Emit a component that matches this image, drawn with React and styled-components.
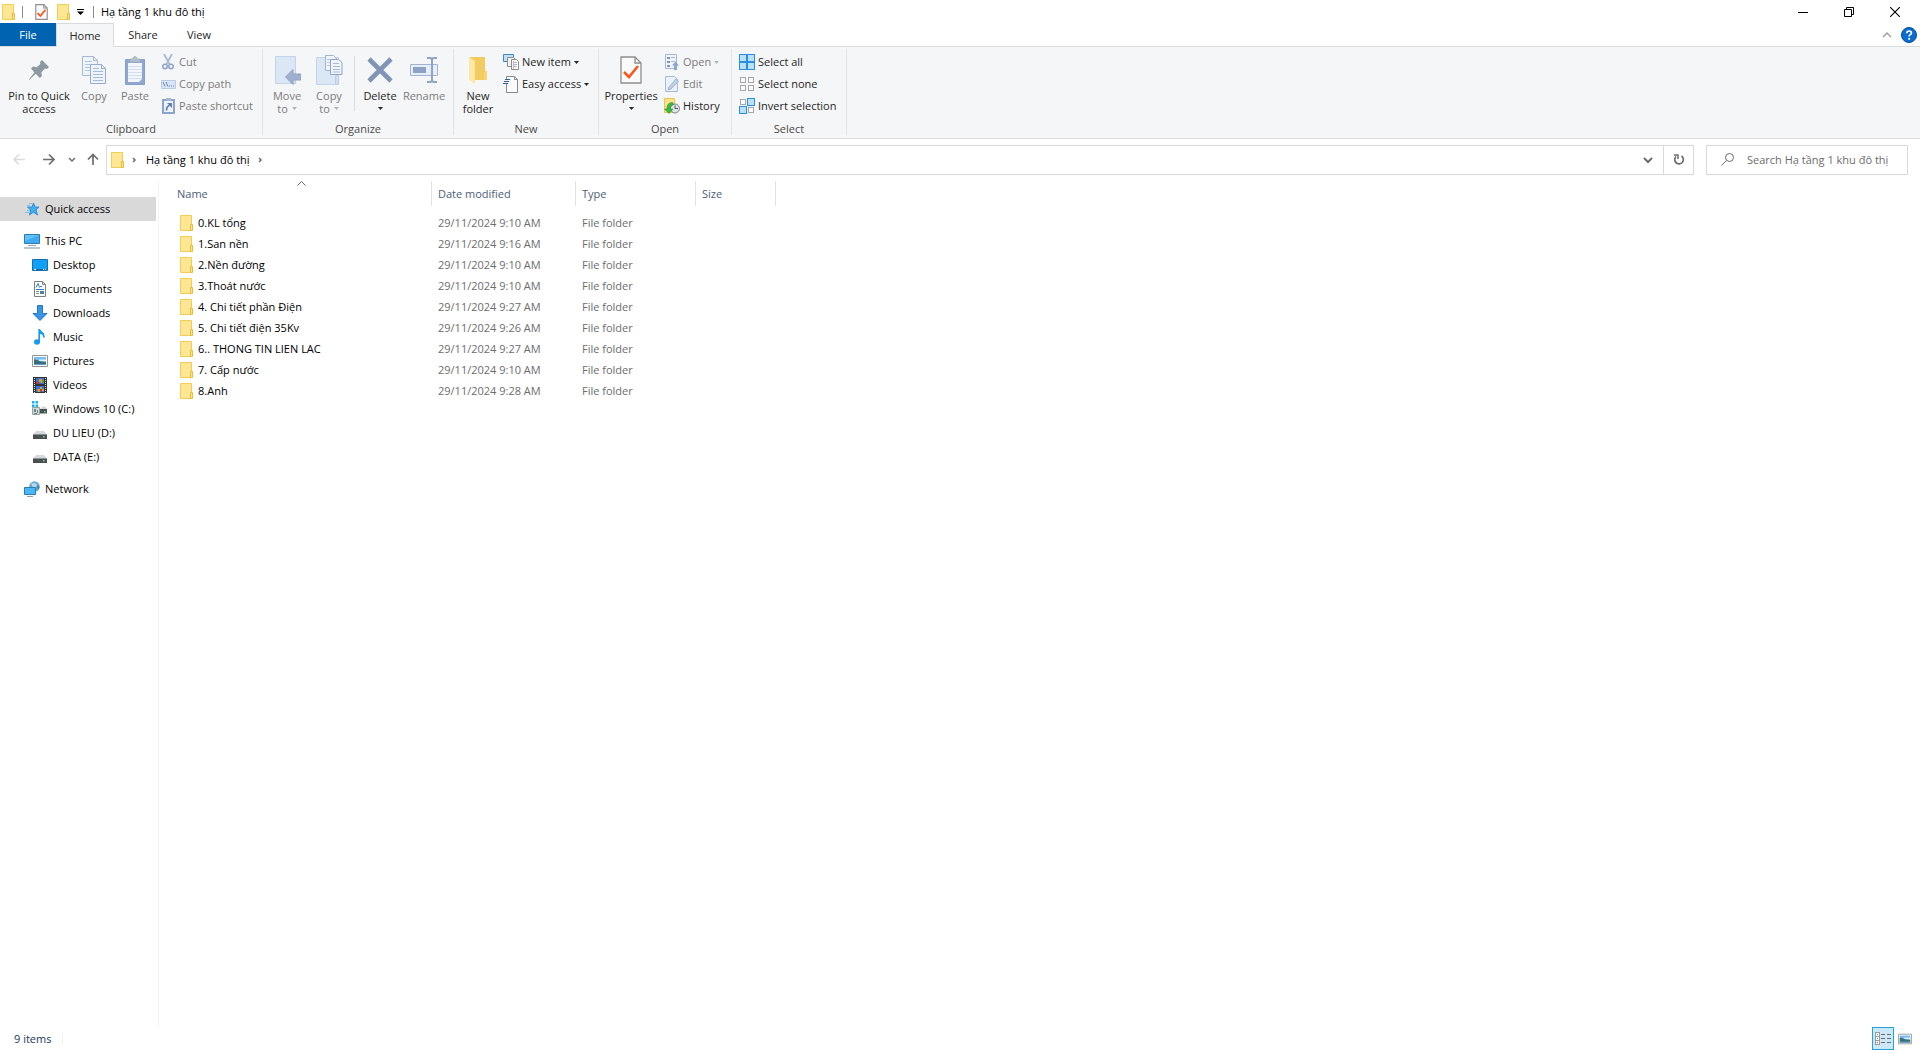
import React from 'react';
import styled, { createGlobalStyle } from 'styled-components';

const GlobalStyle = createGlobalStyle`
  * {
    box-sizing: border-box;
  }
  body {
    margin: 0;
    background: #fff;
    color: #000;
    font-family: 'Open Sans', 'Noto Sans', sans-serif;
    font-size: 11px;
    line-height: 16px;
  }
  button, input {
    font: inherit;
    color: inherit;
    border: 0;
    padding: 0;
    margin: 0;
    background: none;
  }
  svg {
    display: block;
    flex-shrink: 0;
  }
`;

const Window = styled.div`
  display: flex;
  flex-direction: column;
  min-height: 100vh;
`;

/* Title bar */

const TitleBar = styled.header`
  display: flex;
  align-items: center;
  height: 23px;
  padding: 0 2px;
`;

const QuickTools = styled.div`
  display: flex;
  align-items: center;
`;

const QuickButton = styled.button`
  display: flex;
  align-items: center;
  justify-content: center;
  width: ${({ $width }) => $width || 22}px;
  height: 22px;
`;

const Tick = styled.span`
  width: 1px;
  height: 12px;
  margin: 0 7px;
  background: #8c8c8c;
`;

const Title = styled.h1`
  flex: 1;
  margin: 0;
  font-size: 11px;
  font-weight: 400;
`;

const CaptionButton = styled.button`
  display: flex;
  align-items: center;
  justify-content: center;
  width: 46px;
  height: 20px;
`;

/* Ribbon */

const TabRow = styled.nav`
  display: flex;
  height: 23px;
`;

const Tab = styled.button`
  height: ${({ $active }) => ($active ? 24 : 23)}px;
  width: ${({ $width }) => $width}px;
  color: ${({ $file }) => ($file ? '#fff' : '#262626')};
  background: ${({ $file, $active }) =>
    $file ? '#0063b1' : $active ? '#f5f6f7' : 'none'};
  border: ${({ $active }) => ($active ? '1px solid #dadbdc' : 'none')};
  border-bottom: 0;
  z-index: 1;
`;

const TabTools = styled.div`
  display: flex;
  align-items: center;
  gap: 6px;
  margin-left: auto;
  padding-right: 3px;
`;

const PlainButton = styled.button`
  display: flex;
  align-items: center;
  justify-content: center;
  min-width: 16px;
  height: 16px;
`;

const Ribbon = styled.section`
  display: flex;
  height: 93px;
  padding: 2px 0 3px;
  background: #f5f6f7;
  border: solid #dadbdc;
  border-width: 1px 0;
`;

const Group = styled.div`
  display: flex;
  flex-direction: column;
  width: ${({ $width }) => $width}px;
  border-right: 1px solid #e2e3e4;
`;

const GroupBody = styled.div`
  display: flex;
  flex: 1;
  padding-left: ${({ $pad }) => $pad || 4}px;
`;

const GroupLabel = styled.div`
  text-align: center;
  color: #4a4a4a;
  line-height: 12px;
`;

const BigButton = styled.button`
  display: flex;
  flex-direction: column;
  align-items: center;
  width: ${({ $width }) => $width}px;
  padding-top: 3px;
  line-height: 13px;
  white-space: nowrap;
  color: ${({ $muted }) => ($muted ? '#7b7b7b' : '#262626')};
`;

const BigIcon = styled.span`
  display: flex;
  align-items: center;
  justify-content: center;
  height: 36px;
  margin-bottom: 1px;
`;

const LabelLine = styled.span`
  display: flex;
  align-items: center;
  justify-content: center;
  gap: 4px;
  height: 13px;
`;

const SmallColumn = styled.div`
  display: flex;
  flex-direction: column;
  padding-top: 2px;
  margin-left: ${({ $gap }) => $gap || 0}px;
`;

const SmallButton = styled.button`
  display: flex;
  align-items: center;
  gap: 3px;
  height: 22px;
  white-space: nowrap;
  color: ${({ $muted }) => ($muted ? '#7b7b7b' : '#262626')};
`;

const SmallIcon = styled.span`
  display: flex;
  justify-content: center;
  width: 16px;
`;

const Divider = styled.span`
  width: 1px;
  height: 55px;
  margin: 7px 4px 0;
  background: #dcdddf;
`;

/* Address row */

const AddressRow = styled.div`
  display: flex;
  align-items: center;
  height: 42px;
  padding: 0 12px 1px 4px;
`;

const NavButtons = styled.div`
  display: flex;
  align-items: center;
  width: 102px;
`;

const NavButton = styled.button`
  display: flex;
  align-items: center;
  justify-content: center;
  width: ${({ $width }) => $width || 30}px;
  height: 24px;
`;

const AddressBox = styled.div`
  display: flex;
  flex: 1;
  align-items: center;
  height: 30px;
  padding-left: 4px;
  border: 1px solid #d9d9d9;
`;

const Crumb = styled.a`
  color: #000;
  text-decoration: none;
`;

const AddressButton = styled.button`
  display: flex;
  align-items: center;
  justify-content: center;
  width: 30px;
  height: 28px;
  border-left: ${({ $edge }) => ($edge ? '1px solid #d9d9d9' : '0')};
  margin-left: ${({ $push }) => ($push ? 'auto' : '0')};
`;

const SearchBox = styled.label`
  display: flex;
  align-items: center;
  gap: 13px;
  width: 202px;
  height: 30px;
  margin-left: 12px;
  padding-left: 14px;
  border: 1px solid #d9d9d9;
`;

const SearchInput = styled.input`
  flex: 1;
  min-width: 0;
  outline: 0;
  &::placeholder {
    color: #6d6d6d;
    opacity: 1;
  }
`;

/* Body */

const Main = styled.div`
  display: flex;
  flex: 1;
`;

const Sidebar = styled.nav`
  width: 159px;
  padding: 16px 2px 0 0;
  border-right: 1px solid #f3f3f3;
`;

const TreeItem = styled.a`
  display: flex;
  align-items: center;
  gap: 5px;
  height: 24px;
  margin-bottom: ${({ $gap }) => ($gap ? 8 : 0)}px;
  padding-left: ${({ $child }) => ($child ? 32 : 24)}px;
  background: ${({ $selected }) => ($selected ? '#d9d9d9' : 'none')};
  color: #000;
  text-decoration: none;
`;

const Files = styled.main`
  flex: 1;
`;

const FileTable = styled.table`
  table-layout: fixed;
  width: 617px;
  border-collapse: collapse;
`;

const HeadCell = styled.th`
  width: ${({ $width }) => $width}px;
  padding: 0 0 6px;
  font-weight: 400;
  text-align: left;
`;

const HeadInner = styled.span`
  display: block;
  position: relative;
  height: 25px;
  padding-left: ${({ $first }) => ($first ? 18 : 6)}px;
  border-right: 1px solid #e2e2e2;
  line-height: 26px;
  color: #4c607a;
`;

const SortMark = styled.span`
  position: absolute;
  top: 0;
  left: 138px;
`;

const Cell = styled.td`
  height: 21px;
  padding: 0 0 0 6px;
  color: #6d6d6d;
  white-space: nowrap;
`;

const NameCell = styled(Cell)`
  padding-left: 21px;
`;

const FileLink = styled.a`
  display: flex;
  align-items: center;
  gap: 5px;
  color: #000;
  text-decoration: none;
`;

const StatusBar = styled.footer`
  display: flex;
  align-items: center;
  height: 23px;
  padding: 0 6px 0 14px;
  color: #1e395b;
`;

const StatusTick = styled.span`
  width: 1px;
  height: 11px;
  margin-left: 11px;
  background: #f0f0f0;
`;

const ViewButtons = styled.div`
  display: flex;
  align-items: center;
  gap: 2px;
  margin-left: auto;
`;

const ViewButton = styled.button`
  display: flex;
  align-items: center;
  justify-content: center;
  width: ${({ $on }) => ($on ? 22 : 18)}px;
  height: 23px;
  background: ${({ $on }) => ($on ? '#cce8f6' : 'none')};
  border: ${({ $on }) => ($on ? '1px solid #26a0da' : '0')};
`;

/* Icons */

const Svg = ({ w, h, children, ...rest }) => (
  <svg width={w} height={h} viewBox={`0 0 ${w} ${h}`} fill="none" aria-hidden="true" {...rest}>
    {children}
  </svg>
);

const FolderIcon = () => (
  <Svg w={13} h={16}>
    <path d="M.5.5h11v15H.5z" fill="#ffe693" stroke="#f0cd57" />
    <path d="M10.500 9.500h2v6h-2z" fill="#ffe48c" stroke="#e5bd3c" />
  </Svg>
);

const Caret = ({ color = '#262626' }) => (
  <Svg w={5} h={3}>
    <path d="M0 0h5L2.500 3z" fill={color} />
  </Svg>
);

const Chevron = ({ dir = 'right', color = '#6d6d6d', size = 4, width = 1.5 }) => {
  const paths = {
    right: `M4 ${6 - size + 1}l${size - 1} ${size - 1}l-${size - 1} ${size - 1}`,
    down: `M${6 - size} 4l${size} ${size}l${size}-${size}`,
    up: `M${6 - size} 8l${size}-${size}l${size} ${size}`,
  };
  return (
    <Svg w={12} h={12}>
      <path d={paths[dir]} stroke={color} strokeWidth={width} />
    </Svg>
  );
};

const CheckPageIcon = ({ big }) => (
  <svg width={big ? 22 : 13} height={big ? 28 : 16} viewBox="0 0 22 28" fill="none" aria-hidden="true">
    <path d="M1 1h14l6 6v20H1z" fill="#fafafa" stroke="#8e8e8e" strokeWidth={big ? 1.3 : 2} />
    <path d="M15 1v6h6" stroke="#8e8e8e" strokeWidth={big ? 1.3 : 1.8} />
    <path d="M4 16l5 5l9-11" stroke="#f45a1d" strokeWidth={big ? 2.6 : 3.2} />
  </svg>
);

const CustomizeIcon = () => (
  <Svg w={7} h={6}>
    <path d="M0 0h7v1H0zM0 2.500h7L3.500 6z" fill="#000" />
  </Svg>
);

const MinimizeIcon = () => (
  <Svg w={10} h={10}>
    <path d="M0 5.500h10" stroke="#000" />
  </Svg>
);

const RestoreIcon = () => (
  <Svg w={10} h={10}>
    <path d="M.5 2.500h7v7h-7zM2.500 2.500v-2h7v7h-2" stroke="#000" />
  </Svg>
);

const CloseIcon = () => (
  <Svg w={10} h={10}>
    <path d="M0 0l10 10M10 0L0 10" stroke="#000" strokeWidth="1.100" />
  </Svg>
);

const HelpIcon = () => (
  <Svg w={16} h={16}>
    <circle cx="8" cy="8" r="7.500" fill="#0a6cce" stroke="#084f96" />
    <path d="M5.800 6.200c0-3 4.600-2.800 4.600-.2 0 1.700-2.300 1.700-2.300 3.500" stroke="#fff" strokeWidth="1.700" />
    <path d="M7.200 10.900h1.900v1.800H7.200z" fill="#fff" />
  </Svg>
);

const PinIcon = () => (
  <Svg w={20} h={20}>
    <path d="M13 0l7 7-2 2-2-.4-3.600 3.600.4 4-2 1.800-4-4.200L0 20l-.2-.6 5.600-7L2 8.600l2-2 3.800.6L11.400 4 11 2z" fill="#8e989f" />
  </Svg>
);

const CopyIcon = () => (
  <Svg w={24} h={28}>
    <path d="M.5.5h11l4 4v15H.5z" fill="#eff4fb" stroke="#a5b8d6" />
    <path d="M11.500.5v4h4" stroke="#a5b8d6" />
    <path d="M3 5.500h7M3 8.500h6M3 11.500h6M3 14.500h6" stroke="#b5c7e2" />
    <path d="M8.500 8.500h11l4 4v15h-15z" fill="#eff4fb" stroke="#96abcd" />
    <path d="M19.500 8.500v4h4" stroke="#96abcd" />
    <path d="M11 12.500h6M11 15.500h10M11 18.500h10M11 21.500h10M11 24.500h10" stroke="#a5b9da" />
  </Svg>
);

const PasteIcon = () => (
  <Svg w={20} h={29}>
    <path d="M.5 3.500h19v25H.5z" fill="#91a8ce" stroke="#869fc8" />
    <path d="M3 7h14v19H3z" fill="#f2f6fc" />
    <path d="M3 10.500h14M3 13.500h14M3 16.500h14M3 19.500h14M3 22.500h14" stroke="#d3deef" />
    <path d="M14 26l3-3v3z" fill="#91a8ce" />
    <path d="M5 6V3h3c0-3.500 4-3.500 4 0h3v3z" fill="#b5bfcc" stroke="#a1adbd" strokeWidth=".8" />
  </Svg>
);

const CutIcon = () => (
  <Svg w={12} h={16}>
    <path d="M2 0l5.500 10M10 0L4.500 10" stroke="#a9bad3" strokeWidth="1.800" />
    <circle cx="3" cy="12.500" r="2.200" stroke="#8ea4c8" strokeWidth="1.500" />
    <circle cx="9" cy="12.500" r="2.200" stroke="#8ea4c8" strokeWidth="1.500" />
  </Svg>
);

const CopyPathIcon = () => (
  <Svg w={15} h={9}>
    <path d="M.5.5h14v8H.5z" fill="#d8e5f6" stroke="#b9cbe5" />
    <path d="M2 2l2 4.500M5 2l2 4.500" stroke="#6e86b1" />
    <path d="M8 6h1M10 6h1M12 6h1" stroke="#6e86b1" />
  </Svg>
);

const ShortcutIcon = () => (
  <Svg w={13} h={16}>
    <path d="M1 2h11v13H1z" fill="#edf3fb" stroke="#8ca4cc" strokeWidth="2" />
    <path d="M4 0h5v3H4z" fill="#aab5c5" />
    <path d="M4.500 12.500c0-3 1-4.500 3-5" stroke="#627eaf" strokeWidth="1.800" />
    <path d="M5 5h5v5z" fill="#627eaf" />
  </Svg>
);

const MoveToIcon = () => (
  <Svg w={27} h={30}>
    <path d="M1.500 1.500h20v27h-20z" fill="#dce7f5" stroke="#c3d4ea" />
    <path d="M18.500 22v6.500h3V22z" fill="#cfdef1" stroke="#bccfe8" />
    <path d="M11.500 22l7.500-7.500v4.500h8v6h-8v4.500z" fill="#9fb1cf" stroke="#8fa3c5" />
  </Svg>
);

const CopyToIcon = () => (
  <Svg w={27} h={31}>
    <path d="M.5 2.500h22v27H.5z" fill="#dce7f5" stroke="#c3d4ea" />
    <path d="M19.500 20.500h3v9h-3z" fill="#cfdef1" stroke="#bccfe8" />
    <path d="M9.500.5h8l3 3v12h-11z" fill="#f0f5fb" stroke="#9fb3d3" />
    <path d="M11 4.500h6M11 7.500h4M11 10.500h4" stroke="#b5c7e2" />
    <path d="M14.500 4.500h8l3.500 3v12H14.500z" fill="#f0f5fb" stroke="#8fa5c9" />
    <path d="M17 8.500h6M17 11.500h7M17 14.500h7M17 17h7" stroke="#a5b9da" />
  </Svg>
);

const DeleteIcon = () => (
  <Svg w={26} h={26}>
    <path d="M2 2l22 22M24 2L2 24" stroke="#8095b5" strokeWidth="4.600" />
  </Svg>
);

const RenameIcon = () => (
  <Svg w={28} h={27}>
    <path d="M.5 7.500h27v11H.5z" fill="#e6eef9" stroke="#9fb3d3" />
    <path d="M3 10h13v6H3z" fill="#8ca1c4" />
    <path d="M17 1h3c1 0 2 1 2 2v20c0 1-1 2-2 2h-3M27 1h-3c-1 0-2 1-2 2M27 25h-3c-1 0-2-1-2-2" stroke="#8ea3c5" strokeWidth="2" />
  </Svg>
);

const NewFolderIcon = () => (
  <Svg w={19} h={28}>
    <path d="M1 1h15v14h2v9H1z" fill="#f2cb61" />
    <path d="M16 15h2v9h-3v-8z" fill="#f7d571" />
    <path d="M0 1l6 4v23l-6-4z" fill="#ffe9a2" />
  </Svg>
);

const NewItemIcon = () => (
  <Svg w={16} h={16}>
    <path d="M.5.500h10v7H.5z" fill="#bfe0f7" stroke="#3f86bd" />
    <path d="M4.500 3.500h6l2 2v7h-8z" fill="#f3f3f3" stroke="#8d8d8d" />
    <path d="M8.500 5.500h5l2 2v8h-7z" fill="#fff" stroke="#8d8d8d" />
    <path d="M10 8.500h4M10 10.500h4M10 12.500h4" stroke="#9fb6dc" />
    <path d="M10.500 7v8" stroke="#f0a3a3" />
  </Svg>
);

const EasyAccessIcon = () => (
  <Svg w={16} h={17}>
    <path d="M3.500.5h8l3 3v13h-11z" fill="#fafafa" stroke="#8a8a8a" />
    <path d="M11.500.5v3h3" stroke="#8a8a8a" />
    <path d="M1 3h7v5H1z" fill="#f7f7f7" />
    <path d="M2 3.500h5M1 5.500h5M0 7.500h5" stroke="#2b62a8" strokeWidth="1.200" />
  </Svg>
);

const OpenIcon = () => (
  <Svg w={14} h={16}>
    <path d="M.5.500h11v14H.5z" fill="#f1f5fb" stroke="#a6b7d1" />
    <path d="M2 3h3v2H2zM2 7h3v2H2zM2 11h3v2H2z" fill="#7d95bf" />
    <path d="M6 3.500h4M6 7.500h4" stroke="#a9bbd8" />
    <path d="M7 11.500l3.500-4 3.500 4h-2V16H9v-4.500z" fill="#8fa5ca" />
  </Svg>
);

const EditIcon = () => (
  <Svg w={14} h={16}>
    <path d="M.5.500h9l3 3v12H.5z" fill="#eaf1fa" stroke="#a9bbd8" />
    <path d="M3 14l1-3 7-8 2.500 2L6 13z" fill="#c0d0e8" stroke="#93a9cd" strokeWidth=".8" />
  </Svg>
);

const HistoryIcon = () => (
  <Svg w={16} h={16}>
    <path d="M.5.500h10v14H.5z" fill="#ffe38b" stroke="#e9c452" />
    <circle cx="11" cy="10.500" r="4.500" fill="#dfe3e6" stroke="#7b858c" />
    <path d="M11 7.500v3h3" stroke="#555" />
    <path d="M8.500 4.500C4 4.500 2.500 8 3 11H.5L5 15.500 9 11H6.500C6 9 7 7 9.500 6.500z" fill="#3cb843" stroke="#188a24" strokeWidth=".5" />
  </Svg>
);

/* Four squares; `on` lists which of them are filled. */
const SelectIcon = ({ on = [] }) => (
  <Svg w={16} h={16}>
    {[[0, 0], [8, 0], [0, 8], [8, 8]].map(([x, y], i) =>
      on.includes(i) ? (
        <rect key={i} x={x + 0.5} y={y + 0.5} width="7" height="7" fill="#b9e0fb" stroke="#2a8fdd" />
      ) : (
        <rect key={i} x={x + 1.5} y={y + 1.5} width="5" height="5" fill="#fbfbfb" stroke="#a6a6a6" />
      )
    )}
  </Svg>
);

const ArrowIcon = ({ dir, color }) => {
  const paths = {
    left: 'M12 6.500H1M6 1.500L1 6.500l5 5',
    right: 'M0 6.500h11M6 1.500l5 5-5 5',
    up: 'M6 12V1.500M1 6.500l5-5 5 5',
  };
  return (
    <Svg w={12} h={13}>
      <path d={paths[dir]} stroke={color} strokeWidth="1.700" />
    </Svg>
  );
};

const RefreshIcon = () => (
  <Svg w={12} h={13}>
    <path d="M8.500 3A4.300 4.300 0 1 1 3 3.500" stroke="#6d6d6d" strokeWidth="1.700" />
    <path d="M1 2h4.500M5 1.200v4.800" stroke="#6d6d6d" strokeWidth="1.500" />
  </Svg>
);

const SearchIcon = () => (
  <Svg w={13} h={13}>
    <circle cx="8.500" cy="4.500" r="4" stroke="#6d6d6d" />
    <path d="M5.500 7.500L.5 12.500" stroke="#6d6d6d" />
  </Svg>
);

const StarIcon = () => (
  <Svg w={16} h={16}>
    <path d="M9.500 2l1.600 4H15l-3 2.800L13.500 14l-4-2.800L5.500 14l1-5-3-3h4.400z" fill="#41adee" stroke="#1d85cc" strokeWidth=".8" />
    <path d="M5 2.500h3M3 4.500h3M3 9.500h3M1 11.500h4" stroke="#7cc0ea" />
  </Svg>
);

const PcIcon = () => (
  <Svg w={16} h={16}>
    <path d="M.5 1.500h15v9H.5z" fill="#62c1fb" stroke="#2b7cb2" />
    <path d="M1 10V8l14-6v8z" fill="#3eabf2" />
    <path d="M4 12.500h8" stroke="#98a8b3" />
    <path d="M0 15h16" stroke="#8aa3b5" strokeWidth="1.200" />
  </Svg>
);

const DesktopIcon = () => (
  <Svg w={16} h={16}>
    <path d="M.5 2.500h15v11H.5z" fill="#10a0f7" stroke="#1371ad" />
    <path d="M1 12.500h14" stroke="#0f6aa6" />
    <path d="M2 12.500h2M11 12.500h1M13 12.500h1" stroke="#fff" />
  </Svg>
);

const DocumentsIcon = () => (
  <Svg w={16} h={16}>
    <path d="M2.500.5h8l3 3v12h-11z" fill="#fff" stroke="#7f7f7f" />
    <path d="M10.500.5v3h3" stroke="#7f7f7f" />
    <path d="M4 6.500l2-4 1.500 4M8 5.500h2M4 8.500h8" stroke="#2b83c4" />
    <path d="M4 10.500h3M4 12.500h3" stroke="#8a9299" />
    <path d="M8 10h4v3H8z" fill="#4585a8" />
  </Svg>
);

const DownloadsIcon = () => (
  <Svg w={16} h={16}>
    <path d="M5.500.5h5v8h4.500L8 15.500 1 8.500h4.500z" fill="#3995e4" stroke="#2377c4" />
  </Svg>
);

const MusicIcon = () => (
  <Svg w={16} h={16}>
    <ellipse cx="5" cy="13" rx="3" ry="2.700" fill="#169bef" />
    <path d="M7.200 13V0c.5 3.500 5.200 4 4.800 8.500" stroke="#169bef" strokeWidth="1.700" />
    <path d="M7 0c1 2 5 3 5.500 6L8 5z" fill="#169bef" />
  </Svg>
);

const PicturesIcon = ({ w = 16 }) => (
  <svg width={w} height={w} viewBox="0 0 16 16" fill="none" aria-hidden="true">
    <path d="M.5 2.500h15v11H.5z" fill="#fff" stroke="#969696" />
    <path d="M2 4h12v8H2z" fill="#7cbcf4" />
    <path d="M7 6.500h7V8H7z" fill="#e1f1fc" />
    <path d="M2 6.500c4 0 5 2.500 12 2.500v3H2z" fill="#3b6f76" />
    <path d="M2 11h12v1H2z" fill="#5b9fd3" />
  </svg>
);

const VideosIcon = () => (
  <Svg w={16} h={16}>
    <path d="M1 0h14v16H1z" fill="#333" />
    <path d="M2.500 1v15M13.500 1v15" stroke="#ddd" strokeDasharray="1 1" />
    <path d="M4 1h8v6H4zM4 9h8v6H4z" fill="#3a74d8" />
    <path d="M7 2h3v2h2v2H9V5H7zM5 12h3v-2h2v2h2v2H8v1H6z" fill="#dda024" />
    <path d="M4 5h3v2H4zM8 12h2v2H8z" fill="#c4372f" />
    <path d="M10 3h2v3h-2z" fill="#4aa54a" />
  </Svg>
);

const DriveIcon = ({ system }) => (
  <Svg w={16} h={16}>
    {system ? (
      <>
        <path d="M8 8.500l2-3h3l3 3z" fill="#d4d7d9" />
        <path d="M7 8h8v4.500H7z" fill="#4a4f52" />
        <path d="M12 10h1.500v1.500H12z" fill="#5be87c" />
        <path d="M0 0h2.500v2.500H0zM3.500 0H6v2.500H3.500zM0 3.500h2.500V6H0zM3.500 3.500H6V6H3.500z" fill="#16b1f2" />
        <path d="M.5 6.500h7v7h-7z" fill="#d6dbda" stroke="#9aa3a3" />
        <path d="M2 8h2v3H2zM5 9h1v3H5zM2 12h3v1H2z" fill="#5f8a87" />
      </>
    ) : (
      <>
        <path d="M4 6h8l3 3.500H1z" fill="#d6d9db" />
        <path d="M1 9.500h14V14H1z" fill="#4b4f52" />
        <path d="M1 9.500h14" stroke="#8d9194" />
        <path d="M11 11h1.500v1.500H11z" fill="#5be87c" />
      </>
    )}
  </Svg>
);

const NetworkIcon = () => (
  <Svg w={16} h={16}>
    <circle cx="10.500" cy="5.500" r="5.300" fill="#6aa9cf" />
    <path d="M7 2c2 1 4-.5 6 1l-1 3-3 1z" fill="#b4d9ec" />
    <path d="M13 4l2.500 2-1.500 3z" fill="#3c7dab" />
    <path d="M.5 6.500h11v7H.5z" fill="#4ab7f8" stroke="#2b7cb2" />
    <path d="M3 15.500h6" stroke="#8aa3b5" />
  </Svg>
);

const DetailsIcon = () => (
  <Svg w={16} h={13}>
    {['#4a7fc0', '#4a9be0', '#e04040'].map((color, i) => (
      <g key={color}>
        <rect x=".5" y={i * 4 + 0.5} width="4" height="4" fill="#fff" stroke="#9a9a9a" />
        <rect x="2" y={i * 4 + 2} width="1" height="1" fill={color} />
        <path d={`M6 ${i * 4 + 2.5}h4M12 ${i * 4 + 2.5}h4`} stroke="#6b6b6b" />
      </g>
    ))}
  </Svg>
);

const folders = [
  ['0.KL tổng', '29/11/2024 9:10 AM'],
  ['1.San nền', '29/11/2024 9:16 AM'],
  ['2.Nền đường', '29/11/2024 9:10 AM'],
  ['3.Thoát nước', '29/11/2024 9:10 AM'],
  ['4. Chi tiết phần Điện', '29/11/2024 9:27 AM'],
  ['5. Chi tiết điện 35Kv', '29/11/2024 9:26 AM'],
  ['6.. THONG TIN LIEN LAC', '29/11/2024 9:27 AM'],
  ['7. Cấp nước', '29/11/2024 9:10 AM'],
  ['8.Anh', '29/11/2024 9:28 AM'],
];

const places = [
  { label: 'Quick access', icon: <StarIcon />, selected: true, gap: true },
  { label: 'This PC', icon: <PcIcon /> },
  { label: 'Desktop', icon: <DesktopIcon />, child: true },
  { label: 'Documents', icon: <DocumentsIcon />, child: true },
  { label: 'Downloads', icon: <DownloadsIcon />, child: true },
  { label: 'Music', icon: <MusicIcon />, child: true },
  { label: 'Pictures', icon: <PicturesIcon />, child: true },
  { label: 'Videos', icon: <VideosIcon />, child: true },
  { label: 'Windows 10 (C:)', icon: <DriveIcon system />, child: true },
  { label: 'DU LIEU (D:)', icon: <DriveIcon />, child: true },
  { label: 'DATA (E:)', icon: <DriveIcon />, child: true, gap: true },
  { label: 'Network', icon: <NetworkIcon /> },
];

const Big = ({ icon, lines, caret, width, muted }) => (
  <BigButton $width={width} $muted={muted}>
    <BigIcon>{icon}</BigIcon>
    {lines.map((line, i) => (
      <LabelLine key={line}>
        {line}
        {caret && i === 1 && <Caret color={muted ? '#b4b4b4' : '#262626'} />}
      </LabelLine>
    ))}
    {caret && lines.length === 1 && (
      <LabelLine>
        <Caret />
      </LabelLine>
    )}
  </BigButton>
);

const Small = ({ icon, label, caret, muted }) => (
  <SmallButton $muted={muted}>
    <SmallIcon>{icon}</SmallIcon>
    {label}
    {caret && <Caret color={muted ? '#b4b4b4' : '#262626'} />}
  </SmallButton>
);

const App = () => (
  <Window>
    <GlobalStyle />
    <TitleBar>
      <QuickTools>
        <FolderIcon />
        <Tick />
        <QuickButton aria-label="Properties">
          <CheckPageIcon />
        </QuickButton>
        <QuickButton aria-label="New folder">
          <FolderIcon />
        </QuickButton>
        <QuickButton $width={12} aria-label="Customize Quick Access Toolbar">
          <CustomizeIcon />
        </QuickButton>
        <Tick />
      </QuickTools>
      <Title>Hạ tầng 1 khu đô thị</Title>
      <CaptionButton aria-label="Minimize">
        <MinimizeIcon />
      </CaptionButton>
      <CaptionButton aria-label="Restore">
        <RestoreIcon />
      </CaptionButton>
      <CaptionButton aria-label="Close">
        <CloseIcon />
      </CaptionButton>
    </TitleBar>

    <TabRow>
      <Tab $file $width={56}>File</Tab>
      <Tab $active $width={58}>Home</Tab>
      <Tab $width={58}>Share</Tab>
      <Tab $width={54}>View</Tab>
      <TabTools>
        <PlainButton aria-label="Minimize the Ribbon">
          <Chevron dir="up" color="#a0a0a0" />
        </PlainButton>
        <PlainButton aria-label="Help">
          <HelpIcon />
        </PlainButton>
      </TabTools>
    </TabRow>

    <Ribbon>
      <Group $width={263}>
        <GroupBody>
          <Big icon={<PinIcon />} lines={['Pin to Quick', 'access']} width={70} />
          <Big icon={<CopyIcon />} lines={['Copy']} width={40} muted />
          <Big icon={<PasteIcon />} lines={['Paste']} width={42} muted />
          <SmallColumn $gap={4}>
            <Small icon={<CutIcon />} label="Cut" muted />
            <Small icon={<CopyPathIcon />} label="Copy path" muted />
            <Small icon={<ShortcutIcon />} label="Paste shortcut" muted />
          </SmallColumn>
        </GroupBody>
        <GroupLabel>Clipboard</GroupLabel>
      </Group>
      <Group $width={191}>
        <GroupBody $pad={3}>
          <Big icon={<MoveToIcon />} lines={['Move', 'to']} width={42} caret muted />
          <Big icon={<CopyToIcon />} lines={['Copy', 'to']} width={42} caret muted />
          <Divider />
          <Big icon={<DeleteIcon />} lines={['Delete']} width={42} caret />
          <Big icon={<RenameIcon />} lines={['Rename']} width={46} muted />
        </GroupBody>
        <GroupLabel>Organize</GroupLabel>
      </Group>
      <Group $width={145}>
        <GroupBody $pad={3}>
          <Big icon={<NewFolderIcon />} lines={['New', 'folder']} width={42} />
          <SmallColumn $gap={4}>
            <Small icon={<NewItemIcon />} label="New item" caret />
            <Small icon={<EasyAccessIcon />} label="Easy access" caret />
          </SmallColumn>
        </GroupBody>
        <GroupLabel>New</GroupLabel>
      </Group>
      <Group $width={133}>
        <GroupBody>
          <Big icon={<CheckPageIcon big />} lines={['Properties']} width={56} caret />
          <SmallColumn $gap={5}>
            <Small icon={<OpenIcon />} label="Open" caret muted />
            <Small icon={<EditIcon />} label="Edit" muted />
            <Small icon={<HistoryIcon />} label="History" />
          </SmallColumn>
        </GroupBody>
        <GroupLabel>Open</GroupLabel>
      </Group>
      <Group $width={115}>
        <GroupBody $pad={7}>
          <SmallColumn>
            <Small icon={<SelectIcon on={[0, 1, 2, 3]} />} label="Select all" />
            <Small icon={<SelectIcon />} label="Select none" />
            <Small icon={<SelectIcon on={[1, 2]} />} label="Invert selection" />
          </SmallColumn>
        </GroupBody>
        <GroupLabel>Select</GroupLabel>
      </Group>
    </Ribbon>

    <AddressRow>
      <NavButtons>
        <NavButton aria-label="Back">
          <ArrowIcon dir="left" color="#dcdcdc" />
        </NavButton>
        <NavButton aria-label="Forward">
          <ArrowIcon dir="right" color="#6d6d6d" />
        </NavButton>
        <NavButton $width={16} aria-label="Recent locations">
          <Chevron dir="down" size={3} />
        </NavButton>
        <NavButton $width={26} aria-label="Up">
          <ArrowIcon dir="up" color="#6d6d6d" />
        </NavButton>
      </NavButtons>
      <AddressBox>
        <FolderIcon />
        <NavButton $width={22} aria-label="Show locations">
          <Chevron size={3} />
        </NavButton>
        <Crumb href="#folder">Hạ tầng 1 khu đô thị</Crumb>
        <NavButton $width={22} aria-label="Show subfolders">
          <Chevron size={3} />
        </NavButton>
        <AddressButton $push aria-label="Previous locations">
          <Chevron dir="down" width={2} />
        </AddressButton>
        <AddressButton $edge aria-label="Refresh">
          <RefreshIcon />
        </AddressButton>
      </AddressBox>
      <SearchBox>
        <SearchIcon />
        <SearchInput type="text" aria-label="Search" placeholder="Search Hạ tầng 1 khu đô thị" />
      </SearchBox>
    </AddressRow>

    <Main>
      <Sidebar>
        {places.map(({ label, icon, child, selected, gap }) => (
          <TreeItem key={label} href="#place" $child={child} $selected={selected} $gap={gap}>
            {icon}
            {label}
          </TreeItem>
        ))}
      </Sidebar>
      <Files>
        <FileTable>
          <thead>
            <tr>
              <HeadCell $width={273}>
                <HeadInner $first>
                  Name
                  <SortMark>
                    <Svg w={9} h={5}>
                      <path d="M.5 4.500l4-4 4 4" stroke="#6d6d6d" />
                    </Svg>
                  </SortMark>
                </HeadInner>
              </HeadCell>
              <HeadCell $width={144}>
                <HeadInner>Date modified</HeadInner>
              </HeadCell>
              <HeadCell $width={120}>
                <HeadInner>Type</HeadInner>
              </HeadCell>
              <HeadCell $width={80}>
                <HeadInner>Size</HeadInner>
              </HeadCell>
            </tr>
          </thead>
          <tbody>
            {folders.map(([name, date]) => (
              <tr key={name}>
                <NameCell>
                  <FileLink href="#file">
                    <FolderIcon />
                    {name}
                  </FileLink>
                </NameCell>
                <Cell>{date}</Cell>
                <Cell>File folder</Cell>
                <Cell />
              </tr>
            ))}
          </tbody>
        </FileTable>
      </Files>
    </Main>

    <StatusBar>
      9 items
      <StatusTick />
      <ViewButtons>
        <ViewButton $on aria-label="Details">
          <DetailsIcon />
        </ViewButton>
        <ViewButton aria-label="Large icons">
          <PicturesIcon w={14} />
        </ViewButton>
      </ViewButtons>
    </StatusBar>
  </Window>
);

export default App;
